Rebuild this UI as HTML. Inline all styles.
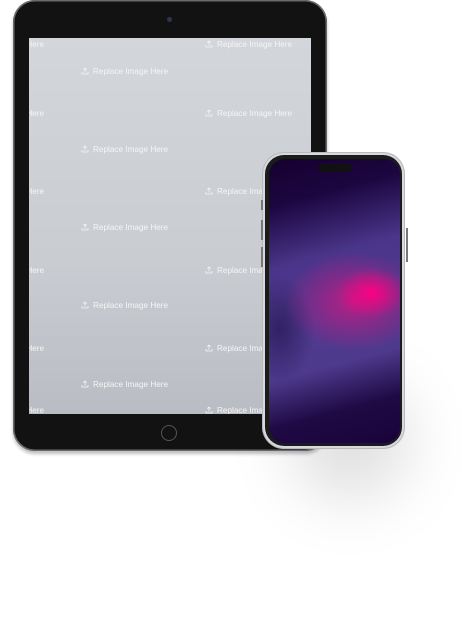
<!DOCTYPE html>
<html><head><meta charset="utf-8"><style>
html,body{margin:0;padding:0;background:#fff;width:462px;height:635px;overflow:hidden;position:relative;font-family:"Liberation Sans",sans-serif}
.ipad{position:absolute;left:13px;top:0;width:314px;height:451px;border-radius:22px;background:#121212;box-shadow:0 0 0 1.5px #6a6a6e inset,0 3px 3px rgba(0,0,0,.25)}
.scr{position:absolute;left:29px;top:38px;width:282px;height:376px;background:linear-gradient(180deg,#d3d6db,#c9ccd1 60%,#b9bdc3);overflow:hidden}
.t{position:absolute;color:#f4f5f7;font-size:8.2px;white-space:nowrap;letter-spacing:0}
.t svg{vertical-align:-1px;margin-right:4px}
.cam{position:absolute;left:167px;top:17px;width:5px;height:5px;border-radius:50%;background:#2b3550}
.home{position:absolute;left:161px;top:425px;width:16px;height:16px;border-radius:50%;border:1px solid #555;box-sizing:border-box}
.shadow{position:absolute;left:290px;top:380px;width:120px;height:120px;border-radius:50%;background:rgba(0,0,0,.12);filter:blur(30px)}
.phone{position:absolute;left:262px;top:152px;width:143px;height:297px;border-radius:22px;background:#d8d9dc;box-shadow:0 0 0 1px #b8b9bc inset}
.pin{position:absolute;left:3px;top:3px;right:3px;bottom:3px;border-radius:19px;background:#1b1b1d}
.pscr{position:absolute;left:7px;top:7px;right:5px;bottom:6px;border-radius:16px;overflow:hidden;
background:
radial-gradient(ellipse 35px 25px at 78% 47%,rgba(255,0,130,.95),rgba(255,0,130,0) 100%),
radial-gradient(ellipse 70px 50px at 65% 50%,rgba(220,20,130,.75),rgba(220,20,130,0) 100%),
radial-gradient(ellipse 35px 55px at 8% 60%,rgba(45,30,95,.9),rgba(45,30,95,0)),
linear-gradient(165deg,#16002f 0%,#1c0640 15%,#4a358a 35%,#4f3a8f 55%,#4d3a8c 70%,#200a45 85%,#180338 100%)}
.island{position:absolute;top:163px;width:33px;height:9px;border-radius:5px;background:#111;left:318px}
.btn{position:absolute;background:#777;width:1.5px}
</style></head><body>
<div class="shadow"></div>
<div class="ipad"></div>
<div class="cam"></div>
<div class="scr" id="s"></div>
<div class="home"></div>
<div class="phone"><div class="pin"></div><div class="pscr"></div></div>
<div class="island"></div>
<div class="btn" style="left:261px;top:200px;height:10px"></div>
<div class="btn" style="left:261px;top:220px;height:20px"></div>
<div class="btn" style="left:261px;top:247px;height:20px"></div>
<div class="btn" style="left:406px;top:228px;height:34px"></div>
<script>
var s=document.getElementById('s');
var ic='<svg width="8" height="8" viewBox="0 0 8 8"><path d="M4 5.5V1M2.3 2.6L4 1l1.7 1.6M1 5v2h6V5" fill="none" stroke="#f4f5f7" stroke-width=".8"/></svg>';
function add(x,y){var d=document.createElement('div');d.className='t';d.style.left=x+'px';d.style.top=y+'px';d.innerHTML=ic+'Replace Image Here';s.appendChild(d);}
[34,112,190,268,347].forEach(function(y){add(52,y-5)});
[7,76,154,233,311,373].forEach(function(y){add(176,y-5);add(-72,y-5)});
</script>
</body></html>
